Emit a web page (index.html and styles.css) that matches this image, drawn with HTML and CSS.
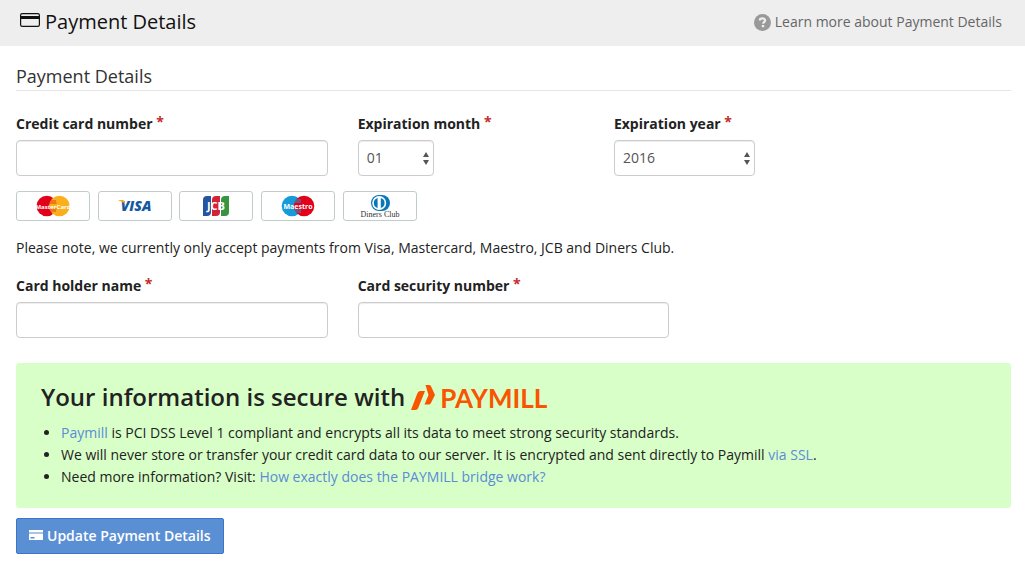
FILE: index.html
```html
<!DOCTYPE html>
<html lang="en">
<head>
<meta charset="utf-8">
<title>Payment Details</title>
<meta name="viewport" content="width=device-width, initial-scale=1">
<link rel="stylesheet" href="styles.css">
</head>
<body>
<header class="topbar">
  <h1 class="topbar-title">
    <svg class="title-icon" width="20" height="14" viewBox="0 0 20 14" aria-hidden="true"><rect x=".6" y=".6" width="18.8" height="12.8" rx="1.6" fill="none" stroke="#111" stroke-width="1.2"/><path d="M1 3h18v3H1z" fill="#111"/></svg>
    Payment Details
  </h1>
  <a class="help-link" href="#help">
    <svg width="17" height="17" viewBox="0 0 17 17" aria-hidden="true"><circle cx="8.5" cy="8.5" r="8.5" fill="#999"/><path d="M5.8 6.5C5.8 3.8 11.1 3.6 11.1 6.4C11.1 8 9.1 8 9 9.6" fill="none" stroke="#eee" stroke-width="2.2"/><path d="M7.8 11h2.4v2.2H7.8z" fill="#eee"/></svg>
    Learn more about Payment Details
  </a>
</header>
<main class="content">
  <form class="payment-form">
    <h2 class="section-title">Payment Details</h2>
    <div class="fields">
      <div class="field field-wide">
        <label for="number">Credit card number <span class="required">*</span></label>
        <input class="control" id="number" type="text">
      </div>
      <div class="field field-month">
        <label for="month">Expiration month <span class="required">*</span></label>
        <span class="select select-short">
          <select class="control" id="month"><option>01</option><option>02</option><option>03</option></select>
          <svg class="arrows" width="6" height="13" viewBox="0 0 6 13" aria-hidden="true"><path d="M0 5L3 0L6 5zM0 8L3 13L6 8z" fill="#555"/></svg>
        </span>
      </div>
      <div class="field field-year">
        <label for="year">Expiration year <span class="required">*</span></label>
        <span class="select select-long">
          <select class="control" id="year"><option>2016</option><option>2017</option><option>2018</option></select>
          <svg class="arrows" width="6" height="13" viewBox="0 0 6 13" aria-hidden="true"><path d="M0 5L3 0L6 5zM0 8L3 13L6 8z" fill="#555"/></svg>
        </span>
      </div>
    </div>
    <ul class="cards">
      <li class="card"><svg width="34" height="22" viewBox="0 0 34 22" role="img" aria-label="MasterCard"><circle cx="10.8" cy="11" r="10.3" fill="#e2001a"/><circle cx="23.4" cy="11" r="10.3" fill="#fbb01b"/><path d="M14 6h6M13.5 8h7M13.5 14h7M14 16h6" stroke="#e2401a"/><text class="mastercard-name" x="17" y="13.5" text-anchor="middle">MasterCard</text></svg></li>
      <li class="card"><svg width="34" height="22" viewBox="0 0 34 22" role="img" aria-label="Visa"><text class="visa-name" x="18" y="16" text-anchor="middle">VISA</text><path d="M.5 5h5l1.6 4.2C5 7 3 5.8.5 5.4z" fill="#f7a823"/></svg></li>
      <li class="card"><svg width="28" height="22" viewBox="0 0 28 22" role="img" aria-label="JCB"><path d="M5 1h4v16q0 4-4 4H1V5q0-4 4-4z" fill="#24559e"/><path d="M14 1h4v16q0 4-4 4h-4V5q0-4 4-4z" fill="#d5213a"/><path d="M23 1h4v16q0 4-4 4h-4V5q0-4 4-4z" fill="#389443"/><text class="jcb-name" x="14" y="15" text-anchor="middle">JCB</text></svg></li>
      <li class="card"><svg width="34" height="22" viewBox="0 0 34 22" role="img" aria-label="Maestro"><circle cx="11" cy="11" r="10.3" fill="#169bd8"/><circle cx="23" cy="11" r="10.3" fill="#e2001a"/><path d="M14 5h6M13 7h7M13 15h7M14 17h6" stroke="#169bd8"/><text class="maestro-name" x="17" y="13.5" text-anchor="middle">Maestro</text></svg></li>
      <li class="card"><svg width="40" height="25" viewBox="0 0 40 25" role="img" aria-label="Diners Club"><path d="M19 1h3a8 8 0 0 1 0 16h-3a8 8 0 0 1 0-16z" fill="#0877ba"/><circle cx="19.2" cy="9" r="7" fill="#fff"/><path d="M17.6 4a5.2 5.2 0 0 0 0 10zM20.8 4a5.2 5.2 0 0 1 0 10z" fill="#0877ba"/><text class="diners-name" x="20" y="23" text-anchor="middle">Diners Club</text></svg></li>
    </ul>
    <p class="note">Please note, we currently only accept payments from Visa, Mastercard, Maestro, JCB and Diners Club.</p>
    <div class="fields">
      <div class="field field-wide">
        <label for="holder">Card holder name <span class="required">*</span></label>
        <input class="control" id="holder" type="text">
      </div>
      <div class="field field-wide">
        <label for="security">Card security number <span class="required">*</span></label>
        <input class="control" id="security" type="text">
      </div>
    </div>
    <section class="secure">
      <h3 class="secure-title">Your information is secure with
        <span class="paymill"><svg width="24" height="26" viewBox="0 0 24 26" aria-hidden="true"><path d="M9 6h5L7.2 23Q6.3 25 4.500 25H0L6.300 8.500Q7.200 6 9 6zM14.500 0H18q1.500 0 2 1.200L24 10l-3.800 7.500Q19.500 19.500 18 19.500h-4.500L17.500 10z" fill="#f95400"/></svg><span class="paymill-name">PAYMILL</span></span>
      </h3>
      <ul class="secure-list">
        <li><a href="#paymill">Paymill</a> is PCI DSS Level 1 compliant and encrypts all its data to meet strong security standards.</li>
        <li>We will never store or transfer your credit card data to our server. It is encrypted and sent directly to Paymill <a href="#ssl">via SSL</a>.</li>
        <li>Need more information? Visit: <a href="#bridge">How exactly does the PAYMILL bridge work?</a></li>
      </ul>
    </section>
    <button class="submit" type="submit">
      <svg class="submit-icon" width="14" height="12" viewBox="0 0 14 12" aria-hidden="true"><path d="M0 1h14v10H0z" fill="#fff"/><path d="M0 3h14v2H0z" fill="#a9c4e8"/><path d="M1.5 8h4v1.5h-4z" fill="#5b8fd3"/></svg>
      Update Payment Details
    </button>
  </form>
</main>
</body>
</html>
```
FILE: styles.css
```css
* { box-sizing: border-box; }

body {
  margin: 0;
  background: #fff;
  color: #222;
  font: 14px/20px "Open Sans", "Noto Sans", sans-serif;
}

a { color: #5b8bd6; text-decoration: none; }

.topbar {
  display: flex;
  align-items: center;
  justify-content: space-between;
  padding: 8px 23px 10px 20px;
  background: #eee;
}

.topbar-title {
  display: flex;
  align-items: center;
  gap: 5px;
  margin: 0;
  color: #111;
  font-size: 20px;
  font-weight: 400;
  line-height: 28px;
}

.title-icon { margin-bottom: 4px; }

.help-link {
  display: flex;
  align-items: center;
  gap: 4px;
  color: #666;
}

.content { padding: 20px 14px 24px 16px; }

.section-title {
  margin: 0 0 22px;
  padding-bottom: 4px;
  border-bottom: 1px solid #e5e5e5;
  color: #333;
  font-size: 18px;
  font-weight: 400;
  line-height: 20px;
}

.fields {
  display: grid;
  grid-template-columns: repeat(12, 1fr);
  column-gap: 30px;
}

.field {
  display: flex;
  flex-direction: column;
  align-items: flex-start;
  gap: 5px;
}

.field-wide { grid-column: span 4; }
.field-month { grid-column: span 3; }
.field-year { grid-column: span 5; }

.field label { font-weight: 700; line-height: 22px; }

.required {
  color: #c42b2b;
  line-height: 1;
  vertical-align: 2px;
}

.control {
  width: 100%;
  height: 36px;
  padding: 0 8px;
  border: 1px solid #ccc;
  border-radius: 4px;
  background: #fff;
  box-shadow: inset 0 1px 1px rgba(0, 0, 0, 0.075);
  color: #555;
  font: inherit;
  appearance: none;
}

.select { position: relative; }
.select-short { width: 76px; }
.select-long { width: 141px; }

.arrows {
  position: absolute;
  top: 12px;
  right: 5px;
  pointer-events: none;
}

.cards {
  margin: 15px 0 17px;
  padding: 0;
  list-style: none;
}

.card {
  display: inline-flex;
  align-items: center;
  justify-content: center;
  width: 74px;
  height: 30px;
  margin-right: 4px;
  border: 1px solid #c3cccc;
  border-radius: 3px;
  vertical-align: top;
}

.mastercard-name { fill: #fff; font: bold 6px "Open Sans", sans-serif; }
.visa-name { fill: #14589f; font: italic 800 14px "Open Sans", sans-serif; }
.jcb-name { fill: #fff; font: bold 11px "Open Sans", sans-serif; }
.maestro-name { fill: #fff; font: bold 7px "Open Sans", sans-serif; }
.diners-name { fill: #333; font: 8px "Liberation Serif", serif; }

.note { margin: 0 0 17px; }

.secure {
  margin: 25px 0 10px;
  padding: 20px 25px;
  border-radius: 3px;
  background: #d8ffc8;
}

.secure-title {
  display: flex;
  align-items: center;
  flex-wrap: wrap;
  gap: 6px;
  margin: 0 0 11px;
  font-size: 24px;
  font-weight: 600;
  line-height: 28px;
}

.paymill {
  display: flex;
  align-items: center;
  gap: 5px;
  padding-top: 2px;
  color: #f95400;
}

.paymill-name { font: 700 26px/26px Lato, sans-serif; }

.secure-list { margin: 0; padding-left: 20px; line-height: 22px; }

.submit {
  display: flex;
  align-items: center;
  gap: 4px;
  padding: 7px 12px;
  border: 1px solid #3a77c9;
  border-radius: 2px;
  background: #5b8fd3;
  color: #fff;
  font: 600 14px/20px "Open Sans", sans-serif;
}

.submit-icon { margin-bottom: 2px; }
```
